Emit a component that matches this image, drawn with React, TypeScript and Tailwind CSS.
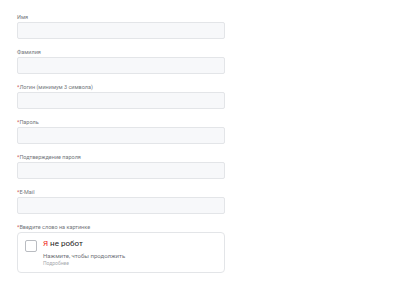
const fields = [
  { label: "Имя", req: false },
  { label: "Фамилия", req: false },
  { label: "Логин (минимум 3 символа)", req: true },
  { label: "Пароль", req: true },
  { label: "Подтверждение пароля", req: true },
  { label: "E-Mail", req: true },
]

const Label = ({ text, req }: { text: string; req: boolean }) => (
  <div className="text-[5.5px] leading-[8px] h-[8px] text-[#74777c]">
    {req && <span className="text-[#c9544f]">*</span>}
    {text}
  </div>
)

export default function App() {
  return (
    <div
      className="w-[403px] h-[294px] bg-white pl-[17px] pt-[13px]"
      style={{ fontFamily: "Roboto, 'Noto Sans', sans-serif" }}
    >
      <div className="w-[208px] flex flex-col gap-[9px]">
        {fields.map((f) => (
          <div key={f.label} className="flex flex-col gap-px">
            <Label text={f.label} req={f.req} />
            <input
              type="text"
              className="h-[17px] w-full bg-[#f7f8fa] border border-[#e3e5e8] rounded-[2px] outline-none"
            />
          </div>
        ))}
        <div className="flex flex-col gap-px">
          <Label text="Введите слово на картинке" req={true} />
          <div className="h-[41px] border border-[#e3e5e8] rounded-[4px] bg-white flex items-start pl-[7px] pt-[6px] gap-[6px]">
            <div className="w-[12px] h-[12px] border border-[#b9bcc1] rounded-[2px] bg-white mt-px" />
            <div className="flex flex-col">
              <div className="text-[8px] leading-[10px] text-[#222]">
                <span className="text-[#e22]">Я</span> не робот
              </div>
              <div className="text-[6px] leading-[7px] mt-[3px] text-[#707378]">
                Нажмите, чтобы продолжить
              </div>
              <div className="text-[5px] leading-[6px] mt-px text-[#a6a9ad]">
                Подробнее
              </div>
            </div>
          </div>
        </div>
      </div>
    </div>
  )
}
